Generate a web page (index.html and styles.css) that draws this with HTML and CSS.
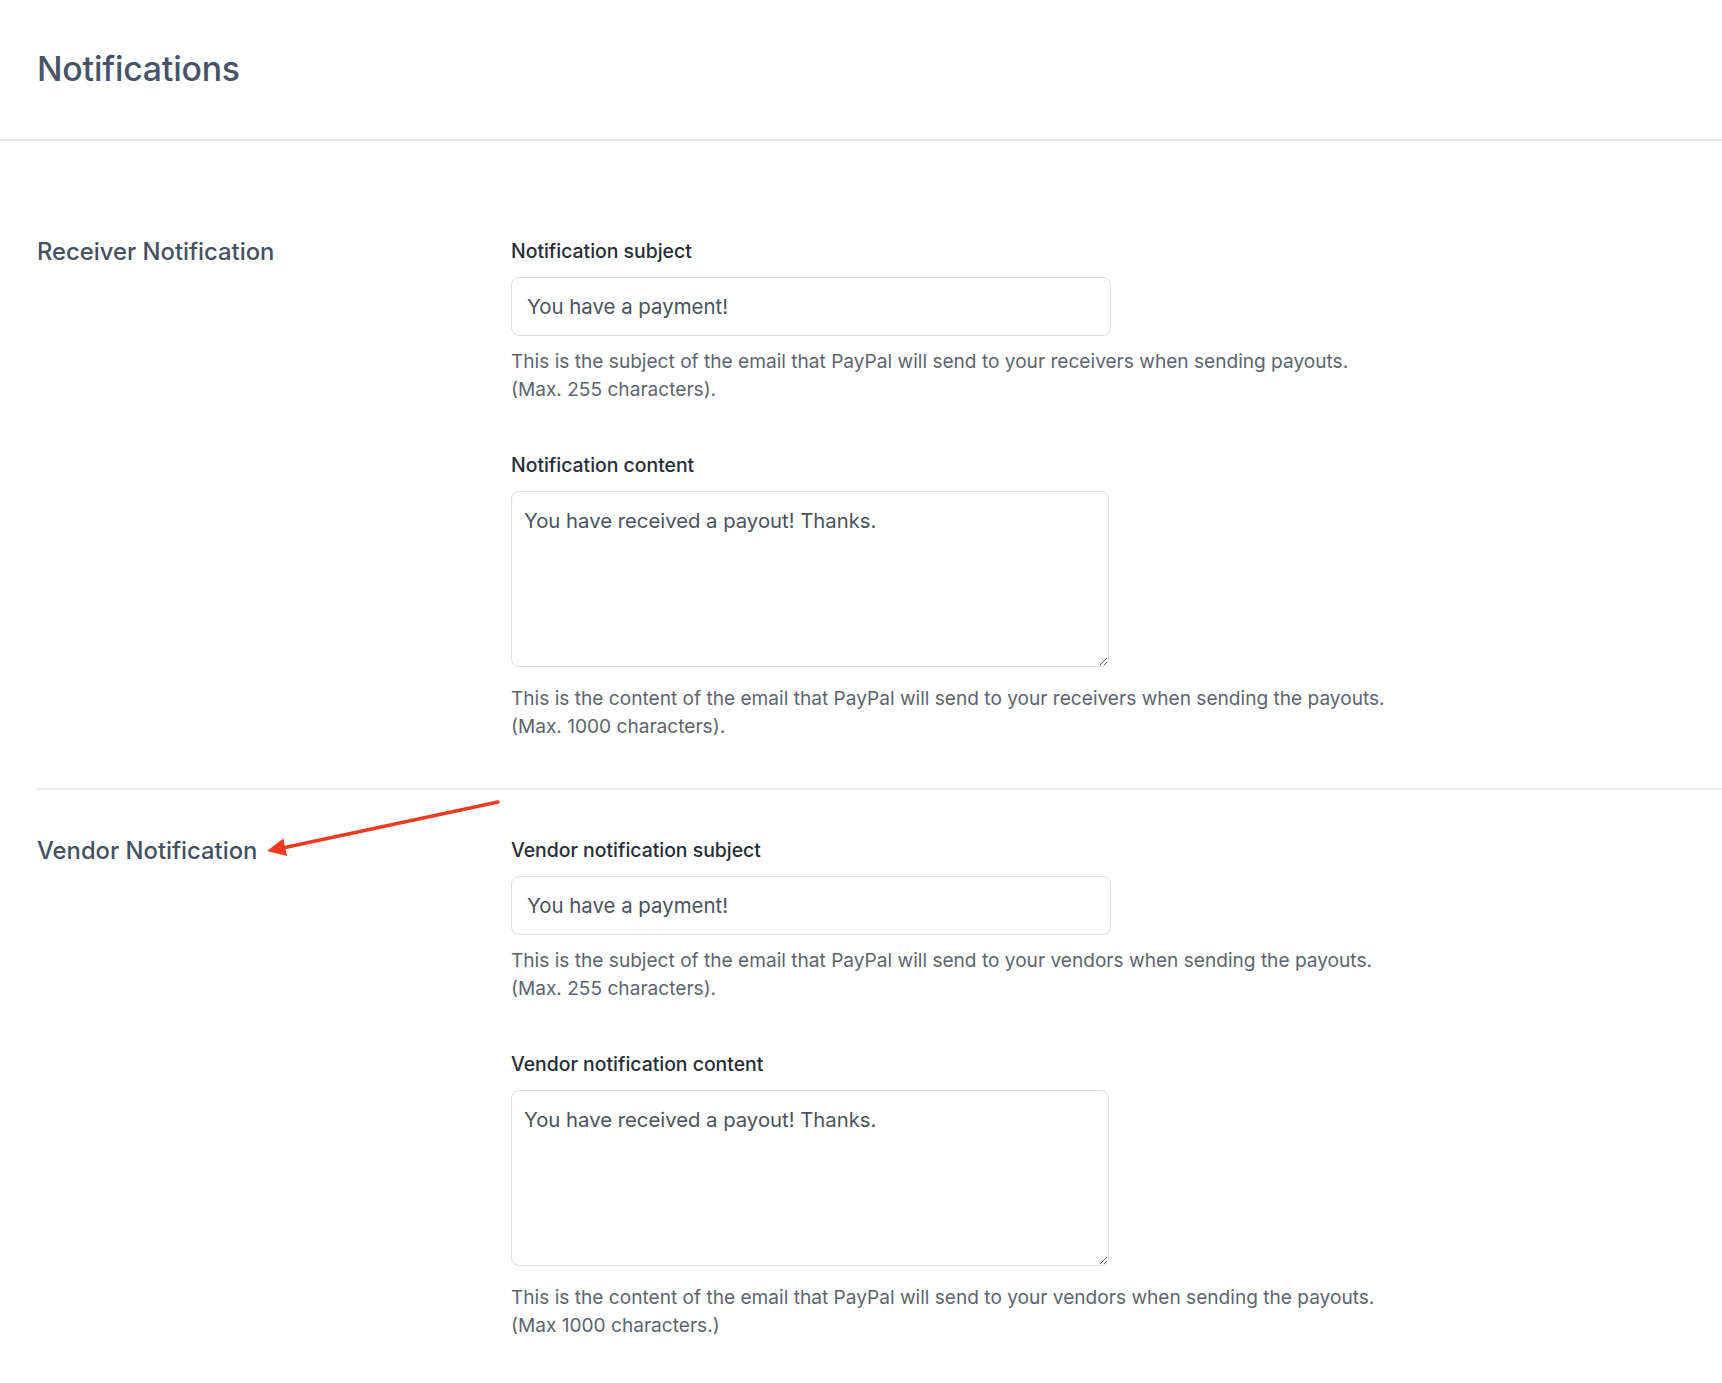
FILE: index.html
```html
<!DOCTYPE html>
<html>
<head>
<meta charset="utf-8">
<link rel="stylesheet" href="styles.css">
</head>
<body>
<header class="page-header">
  <h1 class="page-title">Notifications</h1>
</header>
<main class="content">
  <section class="group group-first">
    <h2 class="group-title">Receiver Notification</h2>
    <div class="fields">
      <div class="field">
        <label class="field-label">Notification subject</label>
        <input class="text-input" type="text" value="You have a payment!">
        <p class="help">This is the subject of the email that PayPal will send to your receivers when sending payouts.<br>(Max. 255 characters).</p>
      </div>
      <div class="field">
        <label class="field-label">Notification content</label>
        <textarea class="text-area">You have received a payout! Thanks.</textarea>
        <p class="help">This is the content of the email that PayPal will send to your receivers when sending the payouts.<br>(Max. 1000 characters).</p>
      </div>
    </div>
  </section>
  <section class="group group-second">
    <h2 class="group-title">Vendor Notification</h2>
    <div class="fields">
      <div class="field">
        <label class="field-label">Vendor notification subject</label>
        <input class="text-input" type="text" value="You have a payment!">
        <p class="help">This is the subject of the email that PayPal will send to your vendors when sending the payouts.<br>(Max. 255 characters).</p>
      </div>
      <div class="field">
        <label class="field-label">Vendor notification content</label>
        <textarea class="text-area">You have received a payout! Thanks.</textarea>
        <p class="help">This is the content of the email that PayPal will send to your vendors when sending the payouts.<br>(Max 1000 characters.)</p>
      </div>
    </div>
    <svg class="arrow" width="480" height="80" viewBox="0 0 480 80">
      <line x1="461" y1="12" x2="248" y2="57.5" stroke="#ef3a22" stroke-width="3.4" stroke-linecap="round"/>
      <polygon points="230,61 250,66 246.3,48.5" fill="#ef3a22"/>
    </svg>
  </section>
</main>
</body>
</html>
```

FILE: styles.css
```css
* { box-sizing: border-box; }
html, body { margin: 0; padding: 0; background: #ffffff; }
body {
  font-family: Inter, "Noto Sans", "Liberation Sans", sans-serif;
  color: #4b5563;
}
.page-header {
  height: 141px;
  border-bottom: 2px solid #e6e7e9;
  padding: 48px 37px 0;
}
.page-title {
  margin: 0;
  font-size: 33.8px;
  font-weight: 500;
  line-height: 42px;
  color: #475467;
  letter-spacing: -0.2px;
}
.content {
  padding-left: 37px;
}
.group {
  position: relative;
  display: flex;
}
.group-first {
  padding-top: 97px;
  padding-bottom: 48px;
}
.group-second {
  border-top: 2px solid #e9eaec;
  padding-top: 47px;
  padding-bottom: 40px;
}
.group-title {
  width: 474px;
  flex: none;
  margin: 0;
  font-size: 23.8px;
  font-weight: 500;
  line-height: 28px;
  color: #465163;
}
.fields {
  display: flex;
  flex-direction: column;
  gap: 49px;
}
.field {
  display: flex;
  flex-direction: column;
}
.field-label {
  font-size: 19.4px;
  font-weight: 500;
  line-height: 26px;
  color: #262d38;
  margin-bottom: 13px;
}
.text-input {
  width: 600px;
  height: 59px;
  border: 1.5px solid #dcdee2;
  border-radius: 8px;
  padding: 0 15px;
  font-family: inherit;
  font-size: 20.4px;
  color: #4b5260;
  background: #fff;
  outline: none;
}
.text-area {
  display: block;
  width: 598px;
  height: 176px;
  border: 1.5px solid #dcdee2;
  border-radius: 8px;
  padding: 16px 12px 12px;
  font-family: inherit;
  font-size: 20.3px;
  line-height: 26px;
  color: #4b5260;
  background: #fff;
  resize: vertical;
  outline: none;
  margin-bottom: 6px;
}
.help {
  margin: 12px 0 0;
  font-size: 19.1px;
  line-height: 27.5px;
  color: #5d6470;
}
.arrow {
  position: absolute;
  left: 0;
  top: 0;
  pointer-events: none;
}
```
